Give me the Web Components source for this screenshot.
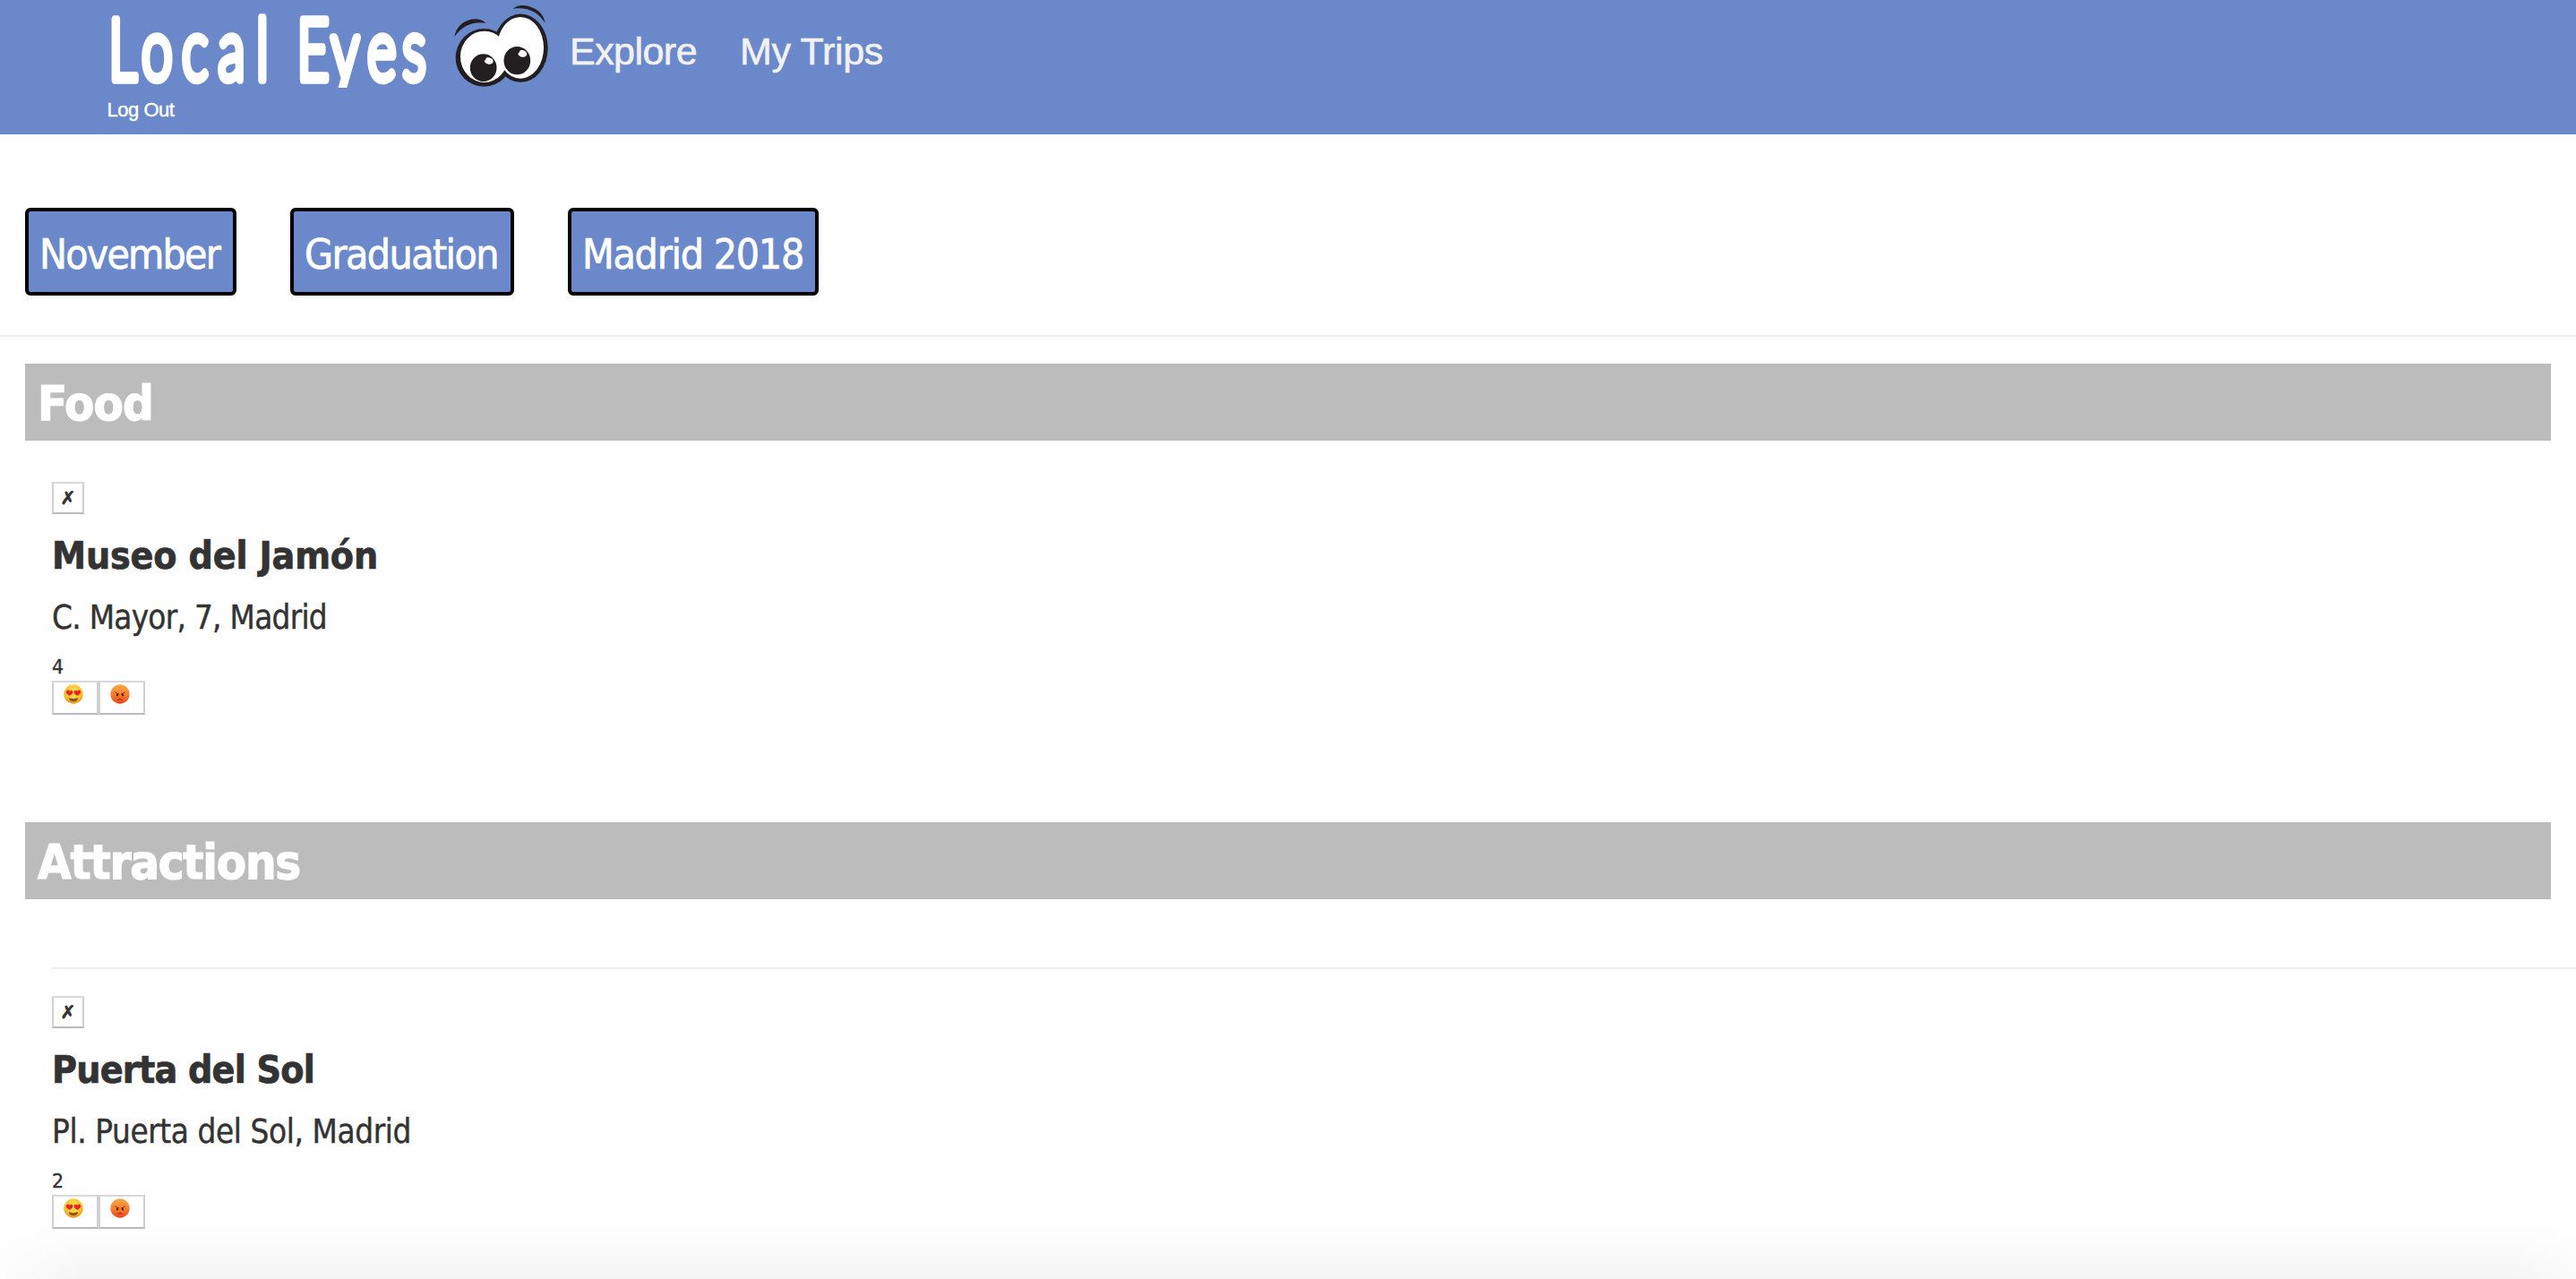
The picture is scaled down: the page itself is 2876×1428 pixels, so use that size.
<!DOCTYPE html>
<html lang="en">
<head>
<meta charset="utf-8">
<title>Local Eyes</title>
<style>
html,body{margin:0;background:#fefefe}
body{height:1428px;overflow:hidden;position:relative;font-family:"DejaVu Sans Condensed","DejaVu Sans",sans-serif;font-stretch:condensed;color:#333}
</style>
</head>
<body>
<site-header></site-header>
<trip-tabs>
  <trip-tab width="236" text-width="201">November</trip-tab>
  <trip-tab width="250" text-width="216">Graduation</trip-tab>
  <trip-tab width="280" text-width="247">Madrid 2018</trip-tab>
</trip-tabs>
<place-section heading="Food" heading-width="129">
  <place-card name="Museo del Jamón" name-width="364" address="C. Mayor, 7, Madrid" address-width="307" votes="4"></place-card>
</place-section>
<place-section heading="Attractions" heading-width="293" divided>
  <place-card name="Puerta del Sol" name-width="293" address="Pl. Puerta del Sol, Madrid" address-width="401" votes="2"></place-card>
</place-section>
<page-shade></page-shade>
<script>
// Adjusts tracking so a run of text occupies the requested advance width.
class FitText extends HTMLElement {
  connectedCallback() {
    const root = this.attachShadow({mode: 'open'});
    root.innerHTML = `<style>:host{display:inline-block;white-space:pre}span{display:inline-block}</style><span></span>`;
    const span = root.querySelector('span');
    span.textContent = this.getAttribute('text');
    const target = Number(this.getAttribute('width'));
    const natural = span.getBoundingClientRect().width;
    span.style.letterSpacing = ((target - natural) / span.textContent.length) + 'px';
  }
}
customElements.define('fit-text', FitText);

class EyesIcon extends HTMLElement {
  connectedCallback() {
    this.attachShadow({mode: 'open'}).innerHTML = `
    <style>:host{display:block;width:122px;height:100px}svg{display:block}</style>
    <svg width="122" height="100" viewBox="0 0 366 300">
      <g fill="#231f20">
        <ellipse cx="151" cy="193" rx="95" ry="97"/>
        <ellipse cx="274" cy="161" rx="91" ry="114.500"/>
        <path d="M52 124C57 86 91 61 127 64Q146 66 157 77C115 70 76 86 52 124Z"/>
        <path d="M248 29C264 17 281 16 298 20C330 28 352 48 355 76C332 40 299 22 248 29Z"/>
      </g>
      <g fill="#fff">
        <ellipse cx="152" cy="190" rx="80" ry="86"/>
        <ellipse cx="273" cy="160" rx="78" ry="103"/>
      </g>
      <g fill="#231f20">
        <ellipse cx="149" cy="227" rx="44.500" ry="46"/>
        <ellipse cx="262" cy="203" rx="44.500" ry="47"/>
      </g>
      <g fill="#fff">
        <path d="M156 200Q157 190 168 193Q182 196 182 206Q180 216 166 215Q154 212 152 204Z"/>
        <path d="M270 175Q270 165 281 168Q295 172 295 182Q292 192 279 191Q266 188 265 179Z"/>
      </g>
    </svg>`;
  }
}
customElements.define('eyes-icon', EyesIcon);

class SiteHeader extends HTMLElement {
  connectedCallback() {
    this.attachShadow({mode: 'open'}).innerHTML = `
    <style>
      :host{display:block;box-sizing:border-box;height:150px;padding-left:110px;background:#6a88ca;font-family:"Liberation Sans",Arial,sans-serif;font-stretch:normal;color:#fff}
      .row{display:flex;height:100px}
      .logo{display:block;flex:none;overflow:visible}
      nav{display:flex;gap:48px;padding:31px 0 0 24px;font-size:43px;line-height:52px;color:#f1f1f1;-webkit-text-stroke:.6px #f1f1f1}
      .out{padding:11px 0 0 9.500px;font-size:22px;line-height:24px;-webkit-text-stroke:.4px #fff}
    </style>
    <div class="row">
      <svg class="logo" width="380" height="98" viewBox="0 0 380 98">
        <g transform="scale(.66 1)">
          <text y="88.500" x="41 99 163 225 277 363 417 479 534" text-anchor="middle" font-family="Lato,sans-serif" font-weight="300" font-size="94" fill="#fff" stroke="#fff" stroke-width="9.500" stroke-linejoin="round">LocalEyes</text>
        </g>
        <rect x="240" y="98" width="70" height="20" fill="#6a88ca"/>
      </svg>
      <eyes-icon></eyes-icon>
      <nav><fit-text text="Explore" width="142"></fit-text><fit-text text="My Trips" width="160"></fit-text></nav>
    </div>
    <div class="out"><fit-text text="Log Out" width="75"></fit-text></div>`;
  }
}
customElements.define('site-header', SiteHeader);

class TripTabs extends HTMLElement {
  connectedCallback() {
    this.attachShadow({mode: 'open'}).innerHTML = `
    <style>:host{display:flex;box-sizing:border-box;height:226px;gap:60px;padding:82px 28px 0;border-bottom:2px solid #eee}</style>
    <slot></slot>`;
  }
}
customElements.define('trip-tabs', TripTabs);

class TripTab extends HTMLElement {
  connectedCallback() {
    this.attachShadow({mode: 'open'}).innerHTML = `
    <style>:host{display:block;box-sizing:border-box;width:${this.getAttribute('width')}px;height:98px;border:4px solid #000;border-radius:6px;background:#6a88ca;color:#fff;padding:20px 0 0 12px;font-size:46px;line-height:56px;-webkit-text-stroke:.7px #fff}</style>
    <fit-text text="${this.textContent}" width="${this.getAttribute('text-width')}"></fit-text>`;
  }
}
customElements.define('trip-tab', TripTab);

class PlaceSection extends HTMLElement {
  connectedCallback() {
    this.attachShadow({mode: 'open'}).innerHTML = `
    <style>
      :host{display:block;padding-top:30px}
      :host([divided]){padding-top:120px}
      h2{box-sizing:border-box;height:86px;margin:0 28px;padding:12px 14px 0;background:#bcbcbc;color:#fff;font-size:54px;line-height:66px;font-weight:700;-webkit-text-stroke:1.200px #fff}
      hr{margin:76px 0 -16px 58px;border:0;height:2px;background:#eee}
    </style>
    <h2><fit-text text="${this.getAttribute('heading')}" width="${this.getAttribute('heading-width')}"></fit-text></h2>
    ${this.hasAttribute('divided') ? '<hr>' : ''}
    <slot></slot>`;
  }
}
customElements.define('place-section', PlaceSection);

class MoodIcon extends HTMLElement {
  connectedCallback() {
    const love = this.getAttribute('kind') === 'love';
    this.attachShadow({mode: 'open'}).innerHTML = `
    <style>:host{display:block;width:22px;height:22px}svg{display:block}</style>
    <svg width="22" height="22" viewBox="0 0 66 66">
      <defs>
        <radialGradient id="g" cx=".5" cy=".4" r=".6"><stop offset="0" stop-color="#ffe254"/><stop offset=".7" stop-color="#fcc62c"/><stop offset="1" stop-color="#e58a17"/></radialGradient>
        <linearGradient id="s" x2="0" y2="1"><stop offset="0" stop-color="#f9a848"/><stop offset=".5" stop-color="#f6822e"/><stop offset="1" stop-color="#f0431a"/></linearGradient>
      </defs>
      <circle cx="33" cy="33" r="32" fill="url(#${love ? 'g' : 's'})"/>
      ${love ? `
      <path d="M20 38C12 34 6 29 9 24C12 18 18 19 20 24C24 18 31 20 31 26C31 31 26 35 20 38Z" fill="#e8212b"/>
      <path d="M46 38C40 35 35 31 35 26C35 20 42 18 46 24C48 19 54 18 57 24C60 29 54 34 46 38Z" fill="#e8212b"/>
      <path d="M17 46Q33 51 49 46Q47 58 33 58Q19 58 17 46Z" fill="#8a5514"/>` : `
      <g fill="none" stroke="#7c2c0c" stroke-width="3" stroke-linecap="round"><path d="M17 27Q23 32 29 33M49 27Q43 32 37 33"/><path d="M26 52Q33 45 40 52"/></g>
      <g fill="#5b1f08"><ellipse cx="24" cy="36" rx="3.500" ry="4.500"/><ellipse cx="42" cy="36" rx="3.500" ry="4.500"/></g>`}
    </svg>`;
  }
}
customElements.define('mood-icon', MoodIcon);

class PlaceCard extends HTMLElement {
  connectedCallback() {
    const a = n => this.getAttribute(n);
    this.attachShadow({mode: 'open'}).innerHTML = `
    <style>
      :host{display:block;padding:46px 0 0 58px}
      button{display:block;box-sizing:border-box;margin:0;padding:0;border:2px solid #d0d0d0;border-top-color:#d8d8d8;border-bottom-color:#bababa;background:#fff;color:#333}
      .close{width:36px;height:36px;font:20px/32px "DejaVu Sans",sans-serif;text-align:center;-webkit-text-stroke:.8px #333}
      h3{margin:20px 0 0;font-size:42.500px;line-height:54px;font-weight:700;-webkit-text-stroke:.7px #333}
      p{margin:20px 0 0;font-size:36.500px;line-height:44px;-webkit-text-stroke:.4px #333}
      .votes{padding-top:21px;font-family:"DejaVu Sans",sans-serif;font-stretch:normal;font-size:20.500px;line-height:24px;height:27px;-webkit-text-stroke:.4px #333}
      .moods{display:flex}
      .moods button{width:52px;height:38px;padding:2px 0 0 11px;display:flex;align-items:flex-start}
    </style>
    <button class="close">✗</button>
    <h3><fit-text text="${a('name')}" width="${a('name-width')}"></fit-text></h3>
    <p><fit-text text="${a('address')}" width="${a('address-width')}"></fit-text></p>
    <div class="votes">${a('votes')}</div>
    <div class="moods"><button><mood-icon kind="love"></mood-icon></button><button><mood-icon kind="angry"></mood-icon></button></div>`;
  }
}
customElements.define('place-card', PlaceCard);

// Soft shade rising from the lower edge of the window.
class PageShade extends HTMLElement {
  connectedCallback() {
    this.attachShadow({mode: 'open'}).innerHTML = `
    <style>:host{display:block;position:absolute;left:0;right:0;bottom:0;height:62px;background:linear-gradient(to top,rgba(0,0,0,.036),rgba(0,0,0,.022) 30%,rgba(0,0,0,.008) 65%,transparent);-webkit-mask-image:linear-gradient(to right,rgba(0,0,0,.1),#000 90px,#000 calc(100% - 70px),rgba(0,0,0,.3));mask-image:linear-gradient(to right,rgba(0,0,0,.1),#000 90px,#000 calc(100% - 70px),rgba(0,0,0,.3));pointer-events:none}</style>`;
  }
}
customElements.define('page-shade', PageShade);
</script>
</body>
</html>
